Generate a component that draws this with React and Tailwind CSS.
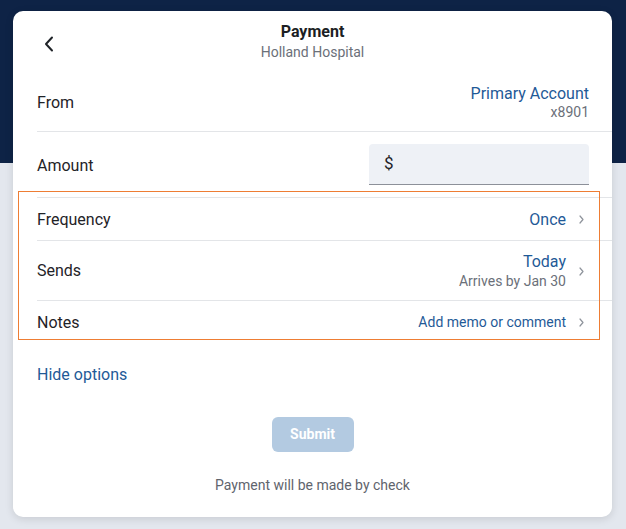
const Chevron = () => (
  <span className="flex w-[16px] justify-center">
    <svg width="5" height="9" viewBox="0 0 5 9" fill="none">
      <path d="M1 1l3 3.5L1 8" stroke="#8f949c" strokeWidth="1.2" strokeLinecap="round" strokeLinejoin="round" />
    </svg>
  </span>
);

const App = () => {
  return (
    <div className="min-h-[529px] w-[626px] bg-[linear-gradient(to_bottom,#0e2346_163px,#e3e7ee_163px)] pt-[11px] font-['Roboto',sans-serif]">
      <div className="relative ml-[13px] h-[506px] w-[599px] rounded-[10px] bg-white shadow-[0_2px_8px_rgba(0,0,0,0.12)]">
        {/* Header */}
        <div className="relative h-[63px] pt-[11px] text-center">
          <button className="absolute left-[28px] top-[23px] p-[2px]">
            <svg width="14" height="16" viewBox="0 0 14 16" fill="none">
              <path d="M9 1.5L3 8l6 6.5" stroke="#1f2328" strokeWidth="2" strokeLinecap="round" strokeLinejoin="round" />
            </svg>
          </button>
          <div className="text-[16px] font-bold leading-[20px] text-[#1c1f24]">Payment</div>
          <div className="text-[14px] leading-[20px] text-[#6b7079]">Holland Hospital</div>
        </div>

        {/* From */}
        <div className="ml-[24px] flex h-[58px] items-center justify-between border-b border-[#e3e5e8] pr-[23px]">
          <span className="pt-[1px] text-[16px] text-[#1f2328]">From</span>
          <div className="text-right">
            <div className="text-[16px] leading-[20px] text-[#1f5a97]">Primary Account</div>
            <div className="text-[14px] leading-[17px] text-[#6b7079]">x8901</div>
          </div>
        </div>

        {/* Amount */}
        <div className="ml-[24px] flex h-[66px] items-center justify-between border-b border-[#e3e5e8] pr-[23px]">
          <span className="pt-[2px] text-[16px] text-[#1f2328]">Amount</span>
          <div className="flex h-[41px] w-[220px] items-center rounded-t-[4px] border-b border-[#8c9099] bg-[#eef1f6] px-[15px]">
            <span className="text-[17px] text-[#1f2328]">$</span>
          </div>
        </div>

        {/* Frequency */}
        <div className="ml-[24px] flex h-[43px] items-center justify-between border-b border-[#e3e5e8] pr-[23px] pt-[1px]">
          <span className="text-[16px] text-[#1f2328]">Frequency</span>
          <div className="flex items-center gap-[7px]">
            <span className="text-[16px] text-[#1f5a97]">Once</span>
            <Chevron />
          </div>
        </div>

        {/* Sends */}
        <div className="ml-[24px] flex h-[60px] items-center justify-between border-b border-[#e3e5e8] pr-[23px] pt-[1px]">
          <span className="text-[16px] text-[#1f2328]">Sends</span>
          <div className="flex items-center gap-[7px]">
            <div className="text-right">
              <div className="text-[16px] leading-[20px] text-[#1f5a97]">Today</div>
              <div className="text-[14px] leading-[18px] text-[#6b7079]">Arrives by Jan 30</div>
            </div>
            <Chevron />
          </div>
        </div>

        {/* Notes */}
        <div className="ml-[24px] flex h-[42px] items-center justify-between pr-[23px] pt-[1px]">
          <span className="text-[16px] text-[#1f2328]">Notes</span>
          <div className="flex items-center gap-[7px]">
            <span className="text-[14px] text-[#1f5a97]">Add memo or comment</span>
            <Chevron />
          </div>
        </div>

        <div className="ml-[24px] mt-[22px] text-[16px] leading-[20px] text-[#1f5a97]">Hide options</div>

        <div className="mt-[32px] flex justify-center">
          <button className="h-[35px] w-[82px] rounded-[6px] bg-[#b3cae1] text-[14px] font-bold text-white">Submit</button>
        </div>

        <div className="mt-[23px] text-center text-[14px] leading-[20px] text-[#5f646d]">Payment will be made by check</div>

        {/* highlight box */}
        <div className="pointer-events-none absolute left-[5px] top-[180px] h-[149px] w-[582px] border-[1.5px] border-[#ee7d34]" />
      </div>
    </div>
  );
};

export default App;
